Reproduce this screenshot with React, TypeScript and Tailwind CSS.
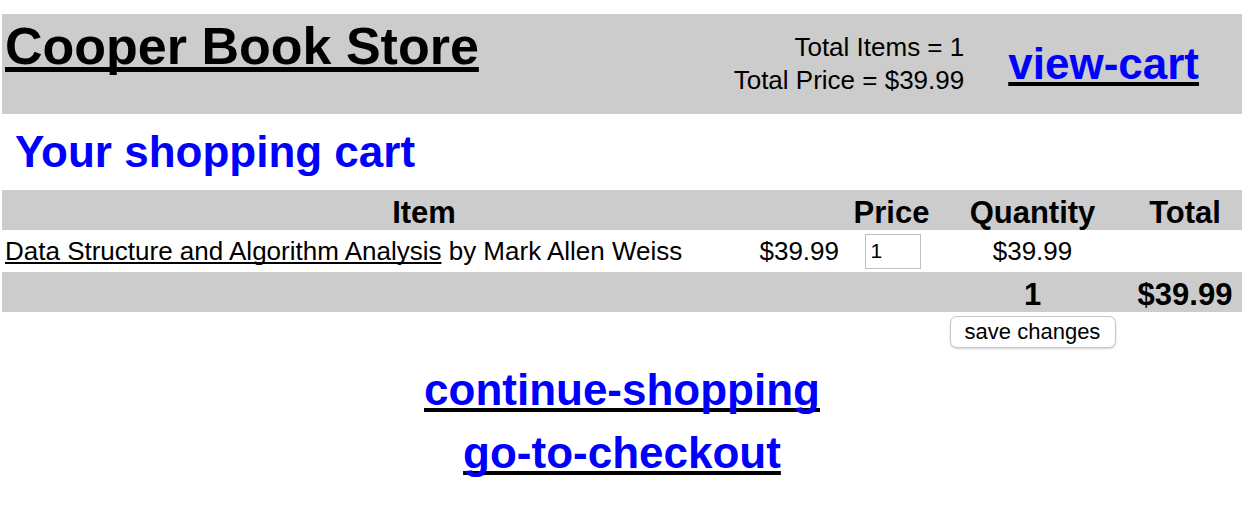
import React from "react";

const cols = "grid w-[1240px] grid-cols-[742px_102px_91px_191px_114px]";
const ul = "underline decoration-black [text-decoration-skip-ink:none]";

export default function App() {
  return (
    <div className="w-[1254px] h-[528px] bg-white text-black font-['Liberation_Sans',Arial,sans-serif]">
      <div className="pt-[14px] px-[2px]">
        <div className="w-[1240px] h-[100px] bg-[#cccccc] flex justify-between">
          <h1 className="text-[52px] font-bold leading-[60px] pl-[3px] pt-[2px]">
            <a href="#" className={ul}>Cooper Book Store</a>
          </h1>
          <div className="flex items-start pr-[43px]">
            <div className="text-right text-[26px] leading-[33px] pt-[17px]">
              <div>Total Items = 1</div>
              <div>Total Price = $39.99</div>
            </div>
            <a
              href="#"
              className={`ml-[44px] mt-[25px] text-[44px] leading-[50px] font-bold text-[#0000ff] ${ul}`}
            >
              view-cart
            </a>
          </div>
        </div>
      </div>

      <h2 className="mt-[13px] pl-[15px] text-[44px] leading-[50px] font-bold text-[#0000ff]">
        Your shopping cart
      </h2>

      <div className="mt-[13px] px-[2px]">
        <div className={`${cols} h-[40px] items-center bg-[#cccccc] text-[31px] font-bold pb-[6px]`}>
          <div className="col-span-2 text-center">Item</div>
          <div className="text-center">Price</div>
          <div className="text-center">Quantity</div>
          <div className="text-center">Total</div>
        </div>
        <div className={`${cols} h-[42px] items-center text-[26px]`}>
          <div className="pl-[3px] whitespace-nowrap">
            <a href="#" className={ul}>
              Data Structure and Algorithm Analysis
            </a>{" "}
            by Mark Allen Weiss
          </div>
          <div className="text-right pr-[7px]">$39.99</div>
          <div className="flex justify-center pl-[2px]">
            <input
              defaultValue="1"
              className="w-[56px] h-[35px] border border-[#c0c0c0] px-[5px] text-[21px] bg-white outline-none"
            />
          </div>
          <div className="text-center">$39.99</div>
          <div></div>
        </div>
        <div className={`${cols} h-[40px] items-center bg-[#cccccc] text-[31px] font-bold pb-[8px]`}>
          <div></div>
          <div></div>
          <div></div>
          <div className="text-center">1</div>
          <div className="text-center">$39.99</div>
        </div>
        <div className={`${cols} pt-[4px]`}>
          <div></div>
          <div></div>
          <div></div>
          <div className="flex justify-center">
            <button className="w-[166px] h-[32px] rounded-[7px] border border-[#c8c8c8] bg-white text-[22px] leading-[30px] shadow-[0_1px_2px_rgba(0,0,0,0.18)]">
              save changes
            </button>
          </div>
          <div></div>
        </div>
      </div>

      <div className="mt-[10px] w-[1244px] flex flex-col items-center text-[44px] leading-[63px] font-bold">
        <a href="#" className={`text-[#0000ff] ${ul}`}>continue-shopping</a>
        <a href="#" className={`text-[#0000ff] ${ul}`}>go-to-checkout</a>
      </div>
    </div>
  );
}
